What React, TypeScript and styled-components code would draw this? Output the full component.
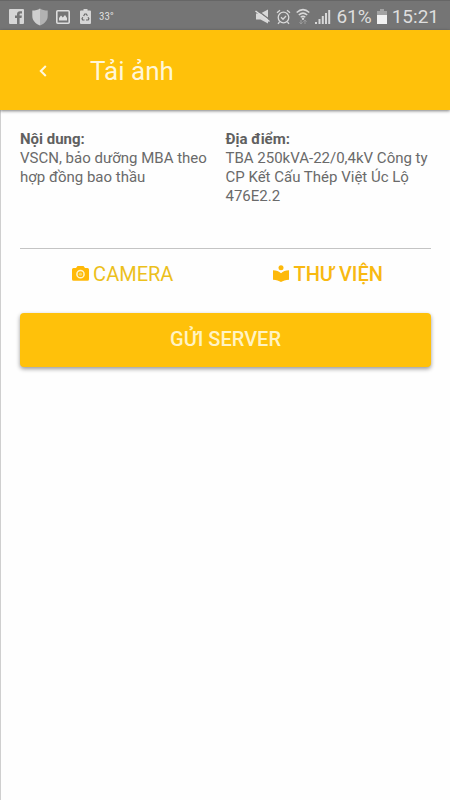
import React from "react";
import styled, { createGlobalStyle } from "styled-components";

const GlobalStyle = createGlobalStyle`
  *, *::before, *::after { box-sizing: border-box; }
  body {
    margin: 0;
    background: #fefefe;
    font-family: Roboto, "Noto Sans", sans-serif;
  }
  button { font: inherit; border: 0; cursor: pointer; }
`;

const Screen = styled.div`
  min-height: 100vh;
  border-left: 1px solid #cfcfcf;
  background: #fefefe;
`;

const StatusBar = styled.div`
  display: flex;
  justify-content: space-between;
  align-items: center;
  height: 30px;
  padding: 2px 11px 0 9px;
  margin-left: -1px;
  background: #757575;
  border-top: 1px solid #666666;
  color: #dedede;
`;

const StatusGroup = styled.div<{ $gap: number }>`
  display: flex;
  align-items: center;
  gap: ${(p) => p.$gap}px;
`;

const StatusText = styled.span`
  font-size: 19px;
  line-height: 24px;
`;

const Temperature = styled.span`
  font-family: "Roboto Condensed", Roboto, sans-serif;
  font-size: 11px;
  line-height: 16px;
  font-weight: 400;
`;

const Header = styled.header`
  display: flex;
  align-items: center;
  gap: 32px;
  height: 80px;
  margin-left: -1px;
  padding: 2px 0 0 28px;
  background: #ffc10a;
  box-shadow: 0 1px 3px rgba(0, 0, 0, 0.5);
`;

const BackButton = styled.button`
  display: flex;
  align-items: center;
  justify-content: center;
  width: 30px;
  height: 40px;
  padding: 0;
  background: transparent;
  color: #fff8df;
`;

const Title = styled.h1`
  margin: 0;
  font-size: 26px;
  line-height: 32px;
  font-weight: 400;
  color: #fff6d8;
`;

const Content = styled.main`
  padding: 20px 19px;
`;

const Details = styled.section`
  display: grid;
  grid-template-columns: 1fr 1fr;
  min-height: 119px;
  border-bottom: 1px solid #c4c4c4;
`;

const Detail = styled.div`
  font-size: 15px;
  line-height: 19px;
  color: #6a6a6a;
`;

const DetailLabel = styled.h2`
  margin: 0;
  font-size: 15px;
  line-height: 19px;
  font-weight: 700;
  color: #606060;
`;

const DetailText = styled.p`
  margin: 0;
`;

const Sources = styled.div`
  display: grid;
  grid-template-columns: 1fr 1fr;
`;

const SourceButton = styled.button<{ $strong?: boolean }>`
  display: flex;
  align-items: center;
  justify-content: center;
  gap: 4px;
  height: 50px;
  padding: 0;
  background: transparent;
  color: ${(p) => (p.$strong ? "#f8b912" : "#ecc01c")};

  && {
    font-size: 20px;
    font-weight: ${(p) => (p.$strong ? 500 : 400)};
  }
`;

const SubmitButton = styled.button`
  width: 100%;
  height: 54px;
  margin-top: 14px;
  padding: 0 0 3px;
  border-radius: 4px;
  background: #ffc10a;
  box-shadow: 0 2px 4px rgba(0, 0, 0, 0.4);
  color: #fff3c4;

  && {
    font-size: 20px;
    font-weight: 500;
  }
`;

const FacebookIcon = () => (
  <svg width="15" height="15" viewBox="0 0 15 15" aria-hidden="true">
    <rect width="15" height="15" rx="1" fill="#d6d6d6" />
    <path d="M8 15V9H6V6.600H8V5.200C8 3.200 9.200 2.200 11 2.200h2V4.600h-1.400c-.8 0-1 .4-1 1.100v.9h2.300L12.500 9h-1.900v6z" fill="#757575" />
  </svg>
);

const ShieldIcon = () => (
  <svg width="16" height="18" viewBox="0 0 16 18" aria-hidden="true">
    <path d="M8 .5C5.800 2 3.500 2.600.3 2.600V8c0 4.500 3.300 7.800 7.700 9.600z" fill="#cfcfcf" />
    <path d="M8 .5c2.200 1.500 4.500 2.100 7.700 2.100V8c0 4.500-3.300 7.800-7.700 9.600z" fill="#b2b2b2" />
  </svg>
);

const ImageIcon = () => (
  <svg width="14" height="14" viewBox="0 0 14 14" aria-hidden="true">
    <rect x="0.800" y="0.800" width="12.400" height="12.400" rx="1" fill="none" stroke="#dedede" strokeWidth="1.600" />
    <path d="M3 10.500V8l2-2.500 1.800 2L9 5l2 3v2.500z" fill="#dedede" />
  </svg>
);

const RecycleSvg = styled.svg`
  margin-left: 2px;
`;

const RecycleIcon = () => (
  <RecycleSvg width="11" height="15" viewBox="0 0 11 15" aria-hidden="true">
    <path d="M3.500 0h4v1.500H10a1 1 0 0 1 1 1V14a1 1 0 0 1-1 1H1a1 1 0 0 1-1-1V2.500a1 1 0 0 1 1-1h2.500z" fill="#d6d6d6" />
    <path d="M3.600 7l1.200-2h1.500l1.100 1.800M8 8.200l.9 1.500-.7 1.300H6M4.500 11H2.700L2 9.700l.8-1.400" fill="none" stroke="#686868" strokeWidth="1.200" />
  </RecycleSvg>
);

const MuteIcon = () => (
  <svg width="17" height="15" viewBox="0 0 17 15" aria-hidden="true">
    <path d="M2 4.500h4.500L14 .5v14L6.500 10.500H2z" fill="#d8d8d8" />
    <path d="M2.500 .8l14 10.500" stroke="#757575" strokeWidth="1.300" />
    <path d="M1.500 2l14 10.500" stroke="#dedede" strokeWidth="1.500" />
  </svg>
);

const AlarmIcon = () => (
  <svg width="15" height="16" viewBox="0 0 15 16" fill="none" stroke="#d8d8d8" strokeWidth="1.300" aria-hidden="true">
    <circle cx="7.500" cy="8.500" r="5.300" />
    <path d="M1 3.700L4 1.200M14 3.700L11 1.200M3.500 13l-1.500 1.800M11.500 13l1.500 1.800M5 8.200l2 2 3-3.200" />
  </svg>
);

const WifiIcon = () => (
  <svg width="14" height="17" viewBox="0 0 14 17" aria-hidden="true">
    <path d="M.7 4.500Q7-1.200 13.300 4.500M2.800 7Q7 3.200 11.200 7M4.700 9.200Q7 7.200 9.300 9.200" fill="none" stroke="#d8d8d8" strokeWidth="1.500" />
    <circle cx="7" cy="10.700" r="1.200" fill="#d8d8d8" />
    <path d="M5 12v4M3.500 14.300L5 16l1.500-1.700M9 16v-4M7.500 13.700L9 12l1.500 1.700" fill="none" stroke="#9c9c9c" />
  </svg>
);

const SignalIcon = () => (
  <svg width="16" height="15" viewBox="0 0 16 15" fill="#d8d8d8" aria-hidden="true">
    <path d="M0 13h2v2H0zM3.500 10h2v5h-2zM6.800 7h2v8h-2zM10 4h2v11h-2zM13.200 1h2v14h-2z" />
  </svg>
);

const BatteryIcon = () => (
  <svg width="10" height="15" viewBox="0 0 10 15" aria-hidden="true">
    <path d="M3 0h4v2h3v4H0V2h3z" fill="#a3a3a3" />
    <path d="M0 6h10v9H0z" fill="#f2f2f2" />
  </svg>
);

const BackIcon = () => (
  <svg width="8" height="12" viewBox="0 0 8 12" fill="none" stroke="currentColor" strokeWidth="2" aria-hidden="true">
    <path d="M6.800 1L1.800 6l5 5" />
  </svg>
);

const CameraIcon = () => (
  <svg width="17" height="18" viewBox="0 0 17 18" aria-hidden="true">
    <path d="M5.500 1h6L13 3h2.500A1.500 1.500 0 0 1 17 4.500v9.800a1.500 1.500 0 0 1-1.500 1.500h-14A1.500 1.500 0 0 1 0 14.300V4.500A1.500 1.500 0 0 1 1.500 3H4z" fill="#ffb908" />
    <circle cx="8.500" cy="9.200" r="3.600" fill="none" stroke="#fff5ce" strokeWidth="1.500" />
    <circle cx="8.500" cy="9.200" r="1.600" fill="#fbd85e" />
  </svg>
);

const LibraryIcon = () => (
  <svg width="16" height="18" viewBox="0 0 16 18" fill="#fdb90b" aria-hidden="true">
    <circle cx="8" cy="2.700" r="2.500" />
    <path d="M8 8.200C6 6.400 3.300 5.300 0 5.200v9.500c3.300.1 6 1.100 8 2.400 2-1.300 4.700-2.300 8-2.400V5.200c-3.300.1-6 1.200-8 3z" />
  </svg>
);

export default function App() {
  return (
    <Screen>
      <GlobalStyle />
      <StatusBar>
        <StatusGroup $gap={8}>
          <FacebookIcon />
          <ShieldIcon />
          <ImageIcon />
          <RecycleIcon />
          <Temperature>33°</Temperature>
        </StatusGroup>
        <StatusGroup $gap={5}>
          <MuteIcon />
          <AlarmIcon />
          <WifiIcon />
          <SignalIcon />
          <StatusText>61%</StatusText>
          <BatteryIcon />
          <StatusText>15:21</StatusText>
        </StatusGroup>
      </StatusBar>
      <Header>
        <BackButton type="button" aria-label="Quay lại">
          <BackIcon />
        </BackButton>
        <Title>Tải ảnh</Title>
      </Header>
      <Content>
        <Details>
          <Detail>
            <DetailLabel>Nội dung:</DetailLabel>
            <DetailText>VSCN, bảo dưỡng MBA theo hợp đồng bao thầu</DetailText>
          </Detail>
          <Detail>
            <DetailLabel>Địa điểm:</DetailLabel>
            <DetailText>TBA 250kVA-22/0,4kV Công ty CP Kết Cấu Thép Việt Úc Lộ 476E2.2</DetailText>
          </Detail>
        </Details>
        <Sources>
          <SourceButton type="button">
            <CameraIcon />
            CAMERA
          </SourceButton>
          <SourceButton type="button" $strong>
            <LibraryIcon />
            THƯ VIỆN
          </SourceButton>
        </Sources>
        <SubmitButton type="button">GỬI SERVER</SubmitButton>
      </Content>
    </Screen>
  );
}
